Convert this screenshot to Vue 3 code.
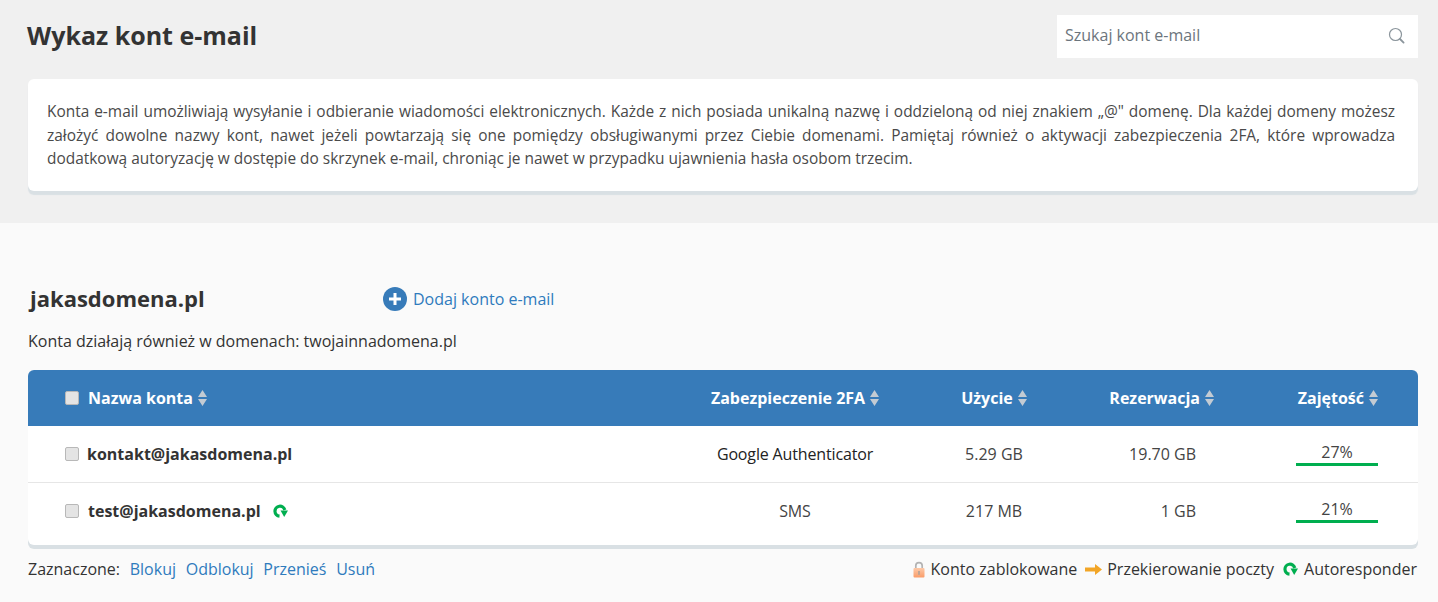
<script setup>
const cols = ['Zabezpieczenie 2FA', 'Użycie', 'Rezerwacja', 'Zajętość']
const rows = [
  { name: 'kontakt@jakasdomena.pl', cls: 'first', auth: 'Google Authenticator', used: '5.29 GB', res: '19.70 GB', pct: '27%', auto: false },
  { name: 'test@jakasdomena.pl', cls: 'second', auth: 'SMS', used: '217 MB', res: '1 GB', pct: '21%', auto: true },
]
const actions = ['Blokuj', 'Odblokuj', 'Przenieś', 'Usuń']
</script>

<template>
  <div class="page">
    <section class="top">
      <div class="top-head">
        <h1>Wykaz kont e-mail</h1>
        <label class="search">
          <input type="text" placeholder="Szukaj kont e-mail" />
          <svg width="17" height="17" viewBox="0 0 17 17" fill="none">
            <circle cx="7.500" cy="7.500" r="6" stroke="#8b959c" stroke-width="1.200" />
            <path d="M12 12l3.600 3.600" stroke="#8b959c" stroke-width="1.800" stroke-linecap="round" />
          </svg>
        </label>
      </div>
      <div class="card">
        <p>Konta e-mail umożliwiają wysyłanie i odbieranie wiadomości elektronicznych. Każde z nich posiada unikalną nazwę i oddzieloną od niej znakiem „@" domenę. Dla każdej domeny możesz założyć dowolne nazwy kont, nawet jeżeli powtarzają się one pomiędzy obsługiwanymi przez Ciebie domenami. Pamiętaj również o aktywacji zabezpieczenia 2FA, które wprowadza dodatkową autoryzację w dostępie do skrzynek e-mail, chroniąc je nawet w przypadku ujawnienia hasła osobom trzecim.</p>
      </div>
    </section>

    <section class="main">
      <div class="domain-head">
        <h2>jakasdomena.pl</h2>
        <a class="add">
          <svg width="24" height="24" viewBox="0 0 24 24">
            <circle cx="12" cy="12" r="12" fill="#377bb9" />
            <path d="M12 6v12M6 12h12" stroke="#fff" stroke-width="3" />
          </svg>
          <span>Dodaj konto e-mail</span>
        </a>
      </div>
      <p class="also">Konta działają również w domenach: twojainnadomena.pl</p>

      <div class="table">
        <div class="row head">
          <div class="cell name">
            <input type="checkbox" class="check" />
            <span class="h-name">Nazwa konta</span>
            <svg class="sort" width="9" height="16" viewBox="0 0 9 16"><path d="M4.500 0L9 7H0zM4.500 16L0 9h9z" fill="#c3cbd3" /></svg>
          </div>
          <div v-for="(c, i) in cols" :key="c" class="cell" :class="'c' + i">
            <span>{{ c }}</span>
            <svg class="sort" width="9" height="16" viewBox="0 0 9 16"><path d="M4.500 0L9 7H0zM4.500 16L0 9h9z" fill="#c3cbd3" /></svg>
          </div>
        </div>
        <div v-for="r in rows" :key="r.name" class="row body" :class="r.cls">
          <div class="cell name">
            <input type="checkbox" class="check" />
            <strong>{{ r.name }}</strong>
            <svg v-if="r.auto" class="auto" width="15" height="15" viewBox="0 0 15 15"><path d="M6.500 12.200A5 5 0 1 1 11.800 6" fill="none" stroke="#00ae4f" stroke-width="3.200" /><path d="M7.500 6.500H15L11.200 13z" fill="#00ae4f" /></svg>
          </div>
          <div class="cell c0 auth">{{ r.auth }}</div>
          <div class="cell c1">{{ r.used }}</div>
          <div class="cell c2 val">{{ r.res }}</div>
          <div class="cell c3 val">
            <div class="usage"><span>{{ r.pct }}</span><i></i></div>
          </div>
        </div>
      </div>

      <div class="foot">
        <div class="selected">
          <span class="sel-label">Zaznaczone:</span>
          <a v-for="a in actions" :key="a">{{ a }}</a>
        </div>
        <div class="legend">
          <span class="leg lock">
            <svg width="12" height="17" viewBox="0 0 12 17">
              <defs>
                <linearGradient id="lockfill" x1="0" y1="0" x2="0" y2="1">
                  <stop offset="0" stop-color="#fdc9a8" />
                  <stop offset="1" stop-color="#fa9c68" />
                </linearGradient>
              </defs>
              <path d="M2.800 8V4.800a3.200 3.200 0 0 1 6.400 0V8" fill="none" stroke="#b3b3b3" stroke-width="1.700" />
              <rect x="0.500" y="7" width="11" height="9.500" rx="1" fill="url(#lockfill)" />
              <rect x="5.100" y="10" width="1.800" height="3.800" fill="#b8a396" />
            </svg>
            Konto zablokowane
          </span>
          <span class="leg">
            <svg width="17" height="11" viewBox="0 0 17 11"><path d="M0 3.500h10V0l7 5.500-7 5.500V7.500H0z" fill="#f2a526" /></svg>
            Przekierowanie poczty
          </span>
          <span class="leg resp">
            <svg width="15" height="15" viewBox="0 0 15 15"><path d="M6.500 12.200A5 5 0 1 1 11.800 6" fill="none" stroke="#00ae4f" stroke-width="3.200" /><path d="M7.500 6.500H15L11.200 13z" fill="#00ae4f" /></svg>
            Autoresponder
          </span>
        </div>
      </div>
    </section>
  </div>
</template>

<style>
html, body { margin: 0; background: #fafafa; }
</style>

<style scoped>
.page {
  font-family: "Open Sans", "Noto Sans", sans-serif;
  color: #333;
  font-size: 16px;
}
.top {
  background: #f0f0f0;
  height: 223px;
  box-sizing: border-box;
  padding: 15px 20px 0 28px;
}
.top-head {
  display: flex;
  justify-content: space-between;
  align-items: center;
  height: 43px;
}
h1 {
  margin: -2px 0 0 -1px;
  font-size: 25px;
  font-weight: 700;
  line-height: 43px;
  color: #333;
}
.search {
  width: 361px;
  height: 43px;
  background: #fff;
  display: flex;
  align-items: center;
  box-sizing: border-box;
  padding: 0 13px 3px 8px;
}
.search input {
  flex: 1;
  border: 0;
  outline: 0;
  min-width: 0;
  padding: 0;
  font: 16px "Open Sans", sans-serif;
  background: transparent;
}
.search input::placeholder { color: #6c757d; opacity: 1; }
.card {
  margin-top: 21px;
  background: #fff;
  border-radius: 6px;
  box-shadow: 0 4px 1px #d9e0e4;
  height: 112px;
  box-sizing: border-box;
  padding: 21px 23px 0 19px;
}
.card p {
  margin: 0;
  font-size: 15.450px;
  line-height: 23.500px;
  text-align: justify;
  color: #4a4a4a;
}
.main {
  padding: 61px 20px 0 28px;
}
.domain-head {
  display: flex;
  align-items: center;
  height: 30px;
}
h2 {
  margin: -2px 0 0 2px;
  width: 353px;
  font-size: 22px;
  font-weight: 700;
  color: #333;
}
.add {
  display: flex;
  align-items: center;
  gap: 6px;
  color: #2f7bbd;
  font-size: 16px;
}
.add svg { display: block; }
.also {
  margin: 15px 0 0;
  line-height: 24px;
  font-size: 16px;
}
.table {
  margin-top: 17px;
  background: #fff;
  border-radius: 6px;
  box-shadow: 0 4px 0 #d9e0e4;
}
.row {
  display: grid;
  grid-template-columns: 657px 220px 179px 156px 178px;
  align-items: center;
}
.head {
  height: 56px;
  background: #377bb9;
  color: #fff;
  font-weight: 700;
  border-radius: 6px 6px 0 0;
}
.body { color: #444; }
.first { height: 57px; border-bottom: 1px solid #e6e6e6; box-sizing: border-box; }
.second { height: 62px; padding-bottom: 6px; box-sizing: border-box; }
.cell {
  display: flex;
  align-items: center;
  justify-content: center;
}
.cell.name { justify-content: flex-start; padding-left: 37px; }
.body .name { color: #333; }
.auth { letter-spacing: -0.150px; }
.first .auth { color: #222; }
.check {
  appearance: none;
  width: 14px;
  height: 14px;
  margin: 0 8px 0 0;
  background: #e4e4e4;
  border: 1px solid #b8b8b8;
  border-radius: 2px;
  box-sizing: border-box;
  flex: none;
}
.second .check { margin-right: 9px; }
.head .check { margin-right: 9px; }
.h-name { margin-right: 5px; }
.sort { margin-left: 5px; display: block; flex: none; }
.h-name + .sort { margin-left: 0; }
strong { font-weight: 700; }
.auto { margin-left: 12px; }
.c1 { padding-right: 1px; }
.c2 { justify-content: flex-end; padding-right: 26px; }
.c2.val { padding-right: 44px; }
.c1.cell:not(.head *) { padding-right: 1px; }
.body .c1 { padding-right: 0; }
.c3 { justify-content: flex-end; padding-right: 40px; }
.usage {
  width: 82px;
  text-align: center;
  margin-top: -1px;
}
.usage span { display: block; line-height: 22px; }
.usage i { display: block; height: 3px; background: #00ae4f; }
.foot {
  margin-top: 12px;
  display: flex;
  justify-content: space-between;
  align-items: center;
  height: 24px;
}
.selected { display: flex; gap: 9.700px; }
.selected a { color: #2f7bbd; }
.legend { display: flex; gap: 8px; margin-right: 1px; }
.leg { display: flex; align-items: center; gap: 5px; }
.lock { gap: 6px; }
.resp { gap: 6px; margin-left: 1px; }
</style>
